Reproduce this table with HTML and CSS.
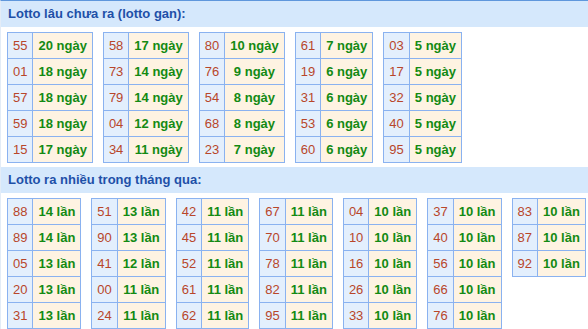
FILE: index.html
```html
<!DOCTYPE html>
<html lang="vi">
<head>
<meta charset="utf-8">
<title>Lotto</title>
<link rel="stylesheet" href="styles.css">
</head>
<body>
<div class="page">
  <div class="section-title">Lotto lâu chưa ra (lotto gan):</div>
  <div class="tables">
    <table class="lt"><tr><td class="num">55</td><td class="val">20 ngày</td></tr><tr><td class="num">01</td><td class="val">18 ngày</td></tr><tr><td class="num">57</td><td class="val">18 ngày</td></tr><tr><td class="num">59</td><td class="val">18 ngày</td></tr><tr><td class="num">15</td><td class="val">17 ngày</td></tr></table>
    <table class="lt"><tr><td class="num">58</td><td class="val">17 ngày</td></tr><tr><td class="num">73</td><td class="val">14 ngày</td></tr><tr><td class="num">79</td><td class="val">14 ngày</td></tr><tr><td class="num">04</td><td class="val">12 ngày</td></tr><tr><td class="num">34</td><td class="val">11 ngày</td></tr></table>
    <table class="lt"><tr><td class="num">80</td><td class="val">10 ngày</td></tr><tr><td class="num">76</td><td class="val">9 ngày</td></tr><tr><td class="num">54</td><td class="val">8 ngày</td></tr><tr><td class="num">68</td><td class="val">8 ngày</td></tr><tr><td class="num">23</td><td class="val">7 ngày</td></tr></table>
    <table class="lt"><tr><td class="num">61</td><td class="val">7 ngày</td></tr><tr><td class="num">19</td><td class="val">6 ngày</td></tr><tr><td class="num">31</td><td class="val">6 ngày</td></tr><tr><td class="num">53</td><td class="val">6 ngày</td></tr><tr><td class="num">60</td><td class="val">6 ngày</td></tr></table>
    <table class="lt"><tr><td class="num">03</td><td class="val">5 ngày</td></tr><tr><td class="num">17</td><td class="val">5 ngày</td></tr><tr><td class="num">32</td><td class="val">5 ngày</td></tr><tr><td class="num">40</td><td class="val">5 ngày</td></tr><tr><td class="num">95</td><td class="val">5 ngày</td></tr></table>
  </div>
  <div class="section-title">Lotto ra nhiều trong tháng qua:</div>
  <div class="tables">
    <table class="lt"><tr><td class="num">88</td><td class="val">14 lần</td></tr><tr><td class="num">89</td><td class="val">14 lần</td></tr><tr><td class="num">05</td><td class="val">13 lần</td></tr><tr><td class="num">20</td><td class="val">13 lần</td></tr><tr><td class="num">31</td><td class="val">13 lần</td></tr></table>
    <table class="lt"><tr><td class="num">51</td><td class="val">13 lần</td></tr><tr><td class="num">90</td><td class="val">13 lần</td></tr><tr><td class="num">41</td><td class="val">12 lần</td></tr><tr><td class="num">00</td><td class="val">11 lần</td></tr><tr><td class="num">24</td><td class="val">11 lần</td></tr></table>
    <table class="lt"><tr><td class="num">42</td><td class="val">11 lần</td></tr><tr><td class="num">45</td><td class="val">11 lần</td></tr><tr><td class="num">52</td><td class="val">11 lần</td></tr><tr><td class="num">61</td><td class="val">11 lần</td></tr><tr><td class="num">62</td><td class="val">11 lần</td></tr></table>
    <table class="lt"><tr><td class="num">67</td><td class="val">11 lần</td></tr><tr><td class="num">70</td><td class="val">11 lần</td></tr><tr><td class="num">78</td><td class="val">11 lần</td></tr><tr><td class="num">82</td><td class="val">11 lần</td></tr><tr><td class="num">95</td><td class="val">11 lần</td></tr></table>
    <table class="lt"><tr><td class="num">04</td><td class="val">10 lần</td></tr><tr><td class="num">10</td><td class="val">10 lần</td></tr><tr><td class="num">16</td><td class="val">10 lần</td></tr><tr><td class="num">26</td><td class="val">10 lần</td></tr><tr><td class="num">33</td><td class="val">10 lần</td></tr></table>
    <table class="lt"><tr><td class="num">37</td><td class="val">10 lần</td></tr><tr><td class="num">40</td><td class="val">10 lần</td></tr><tr><td class="num">56</td><td class="val">10 lần</td></tr><tr><td class="num">66</td><td class="val">10 lần</td></tr><tr><td class="num">76</td><td class="val">10 lần</td></tr></table>
    <table class="lt"><tr><td class="num">83</td><td class="val">10 lần</td></tr><tr><td class="num">87</td><td class="val">10 lần</td></tr><tr><td class="num">92</td><td class="val">10 lần</td></tr></table>
  </div>
</div>
</body>
</html>
```

FILE: styles.css
```css
html, body {
  margin: 0;
  padding: 0;
  background: #ffffff;
}

.page {
  width: 588px;
  border-top: 1px solid #5f97dc;
  border-left: 1px solid #e3ecf7;
  box-sizing: border-box;
  font-family: "Liberation Sans", Arial, sans-serif;
}

.section-title {
  height: 26px;
  line-height: 26px;
  padding-left: 7px;
  background: #d5e8fc;
  color: #1e50a8;
  font-weight: bold;
  font-size: 13px;
}

.tables {
  display: flex;
  flex-wrap: wrap;
  align-items: flex-start;
  gap: 10px;
  padding: 5px 0 4px 6px;
}

.lt {
  border-collapse: collapse;
  font-size: 13px;
}

.lt td {
  height: 25px;
  padding: 0 5px;
  border: 1px solid #8ab2f0;
  text-align: center;
  white-space: nowrap;
}

.lt .num {
  background: #e3effd;
  color: #b8462a;
}

.lt .val {
  background: #fef3e2;
  color: #138a13;
  font-weight: bold;
}
```
